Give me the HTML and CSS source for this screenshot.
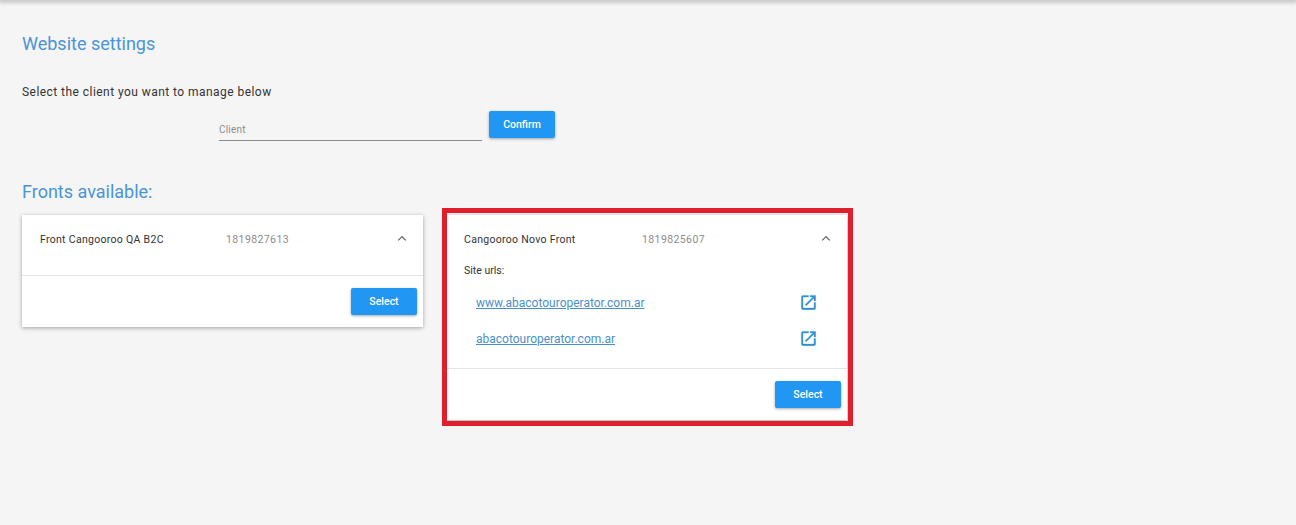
FILE: index.html
```html
<!DOCTYPE html>
<html lang="en">
<head>
<meta charset="utf-8">
<title>Website settings</title>
<link rel="stylesheet" href="styles.css">
</head>
<body>
<div class="topbar"></div>
<main class="page">
  <h1 class="title">Website settings</h1>
  <p class="intro">Select the client you want to manage below</p>
  <div class="client-row">
    <div class="field"><span class="placeholder">Client</span></div>
    <button class="btn">Confirm</button>
  </div>
  <h2 class="subtitle">Fronts available:</h2>
  <div class="cards">
    <section class="card">
      <div class="card-head">
        <span class="name">Front Cangooroo QA B2C</span>
        <span class="code">1819827613</span>
        <svg class="chevron" viewBox="0 0 12 8"><path d="M1.5 6.2 6 1.8l4.5 4.4" /></svg>
      </div>
      <div class="card-body empty"></div>
      <div class="card-foot"><button class="btn">Select</button></div>
    </section>
    <section class="card">
      <div class="card-head">
        <span class="name name-short">Cangooroo Novo Front</span>
        <span class="code">1819825607</span>
        <svg class="chevron" viewBox="0 0 12 8"><path d="M1.5 6.2 6 1.8l4.5 4.4" /></svg>
      </div>
      <div class="card-body">
        <div class="urls-label">Site urls:</div>
        <div class="url-list">
          <div class="url-row">
            <a class="url" href="#">www.abacotouroperator.com.ar</a>
            <svg class="ext" viewBox="0 0 24 24"><path d="M19 19H5V5h7V3H5a2 2 0 0 0-2 2v14a2 2 0 0 0 2 2h14a2 2 0 0 0 2-2v-7h-2v7zM14 3v2h3.59l-9.83 9.83 1.41 1.41L19 6.41V10h2V3h-7z"/></svg>
          </div>
          <div class="url-row">
            <a class="url" href="#">abacotouroperator.com.ar</a>
            <svg class="ext" viewBox="0 0 24 24"><path d="M19 19H5V5h7V3H5a2 2 0 0 0-2 2v14a2 2 0 0 0 2 2h14a2 2 0 0 0 2-2v-7h-2v7zM14 3v2h3.59l-9.83 9.83 1.41 1.41L19 6.41V10h2V3h-7z"/></svg>
          </div>
        </div>
      </div>
      <div class="card-foot"><button class="btn">Select</button></div>
      <div class="highlight"></div>
    </section>
  </div>
</main>
</body>
</html>
```

FILE: styles.css
```css
* { box-sizing: border-box; }
html, body { margin: 0; height: 100%; }
body {
  background: #f5f5f5;
  font-family: Roboto, "Liberation Sans", sans-serif;
  overflow: hidden;
}
.topbar {
  height: 1px;
  background: #cfcfcf;
  box-shadow: 0 0 4px 1px rgba(0, 0, 0, .3);
}
.page { padding: 0 22px; }
.title {
  margin: 32px 0 0;
  font-size: 18px;
  line-height: 21px;
  font-weight: 400;
  color: #4a94d6;
}
.intro {
  margin: 30px 0 0;
  font-size: 12px;
  line-height: 16px;
  letter-spacing: .45px;
  color: #333;
}
.client-row {
  display: flex;
  align-items: flex-start;
  margin: 11px 0 0 197px;
  gap: 7px;
}
.field {
  width: 263px;
  height: 30px;
  padding-top: 12px;
  border-bottom: 1px solid #8a8a8a;
}
.placeholder {
  display: block;
  font-size: 10px;
  line-height: 14px;
  letter-spacing: .2px;
  color: #8d8d8d;
}
.btn {
  display: block;
  width: 66px;
  height: 27px;
  padding: 0;
  border: 0;
  border-radius: 2px;
  background: #2196f3;
  color: #fff;
  font-family: inherit;
  font-size: 10.5px;
  font-weight: 500;
  box-shadow: 0 1px 3px rgba(0, 0, 0, .35);
}
.subtitle {
  margin: 40px 0 0;
  font-size: 18px;
  line-height: 21px;
  font-weight: 400;
  color: #4a94d6;
}
.cards {
  display: flex;
  align-items: flex-start;
  gap: 23px;
  margin-top: 13px;
}
.card {
  position: relative;
  width: 401px;
  background: #fff;
  box-shadow: 0 1px 4px rgba(0, 0, 0, .35);
}
.card-head {
  display: flex;
  align-items: center;
  height: 49px;
  padding: 0 16px 0 18px;
  font-size: 10.5px;
  letter-spacing: .3px;
}
.name { width: 186px; color: #333; }
.name-short { width: 178px; }
.code { color: #8c8c8c; letter-spacing: .4px; }
.chevron {
  width: 10px;
  height: 7px;
  margin: -3px 0 0 auto;
  fill: none;
  stroke: #666;
  stroke-width: 1.5;
}
.card-body { padding: 0 18px 11px; }
.card-body.empty { height: 11px; padding: 0; }
.urls-label {
  font-size: 10.5px;
  line-height: 14px;
  color: #333;
}
.url-list { margin-top: 7px; }
.url-row {
  display: flex;
  align-items: center;
  justify-content: space-between;
  height: 36px;
  padding: 0 11px 0 12px;
}
.url {
  font-size: 12px;
  color: #4a90c8;
  text-decoration: underline;
}
.ext { width: 19px; height: 19px; margin-top: -2px; fill: #2f8fd0; stroke: #2f8fd0; stroke-width: .4; }
.card-foot {
  display: flex;
  justify-content: flex-end;
  height: 52px;
  padding: 12px 6px 0 0;
  border-top: 1px solid #e4e4e4;
}
.highlight {
  position: absolute;
  inset: -7px -6px -6px -4px;
  border: 5px solid #e01f2d;
  pointer-events: none;
}
```
